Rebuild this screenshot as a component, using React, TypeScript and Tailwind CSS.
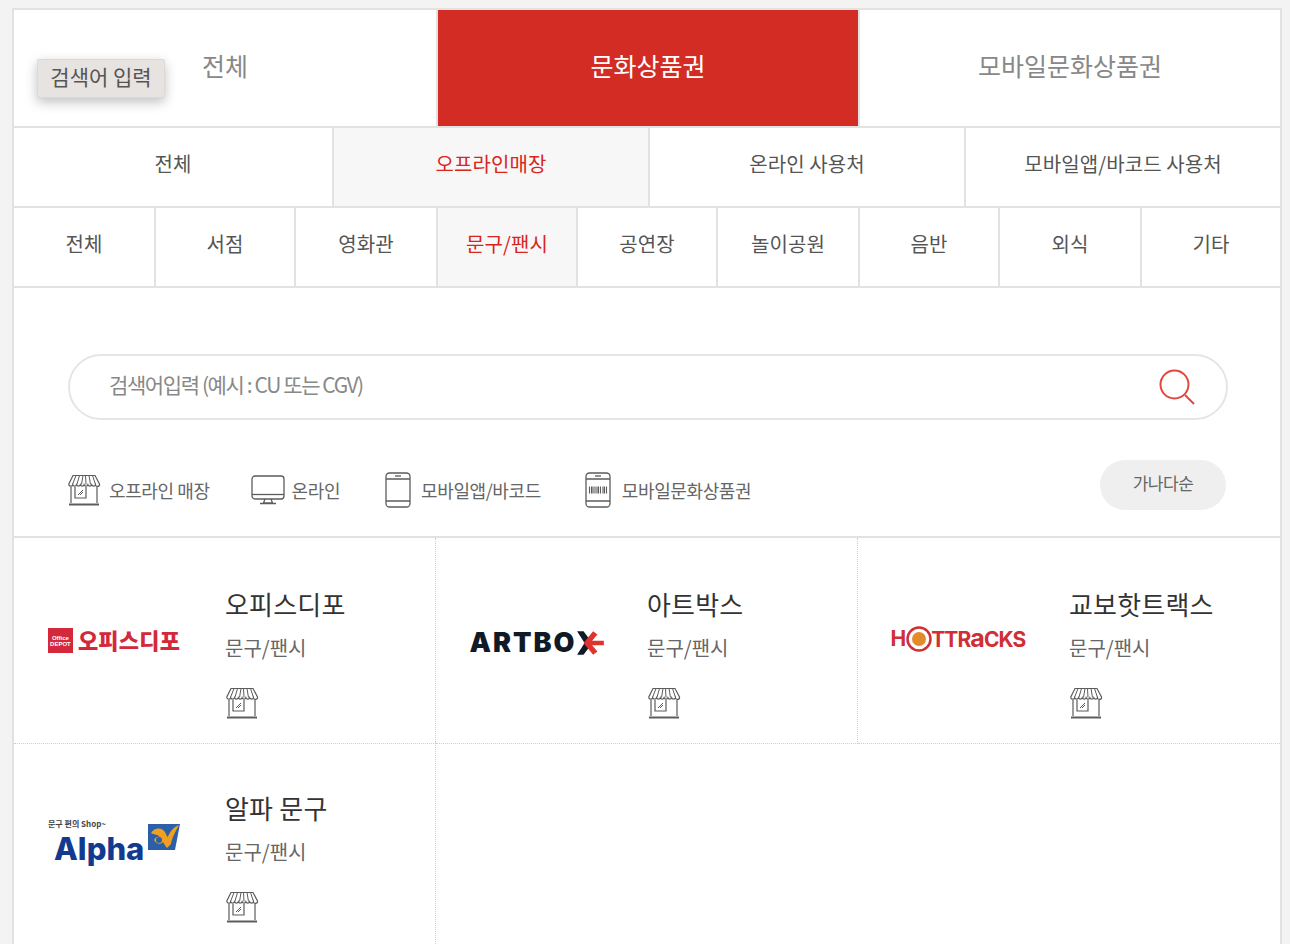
import React from "react";

const KR = "font-['Noto_Sans_CJK_KR','Noto_Sans',sans-serif]";

function StoreIcon({ className }: { className?: string }) {
    return (
        <svg viewBox="0 0 34 32" className={className} fill="none" stroke="#5c5c5c" strokeWidth="1.2">
            <path d="M6 1.500h22l4.500 8.500a2 2 0 0 1-4 .8 2 2 0 0 1-3.800 0 2 2 0 0 1-3.800 0 2 2 0 0 1-3.800 0 2 2 0 0 1-3.800 0 2 2 0 0 1-3.800 0 2 2 0 0 1-3.800 0 2 2 0 0 1-3.900-.8z" />
            <path d="M9 1.500 5.500 10.500M12.500 1.500l-2.600 9M16 1.500l-1.500 9M18.500 1.500l.5 9M22 1.500l1.500 9M25.500 1.500l3 9" strokeWidth="1" />
            <path d="M4 13v16M30 13v16" />
            <path d="M2 30.500h30" strokeWidth="2" />
            <path d="M8 13v11h11V13" />
            <path d="M11 21l5-5M13 21l3-3" strokeWidth="1" />
        </svg>
    );
}

function MonitorIcon() {
    return (
        <svg viewBox="0 0 34 30" className="w-[34px] h-[30px]" fill="none" stroke="#5c5c5c" strokeWidth="1.3">
            <rect x="1" y="1" width="32" height="23" rx="3" />
            <path d="M1 19.500h32" />
            <path d="M14 24l-1.500 4h9L20 24M9 28.500h16" />
        </svg>
    );
}

function PhoneIcon({ barcode }: { barcode?: boolean }) {
    return (
        <svg viewBox="0 0 26 36" className="w-[26px] h-[36px]" fill="none" stroke="#5c5c5c" strokeWidth="1.3">
            <rect x="1" y="1" width="24" height="34" rx="3.500" />
            <path d="M1 7h24M1 29h24" />
            <path d="M10 4h6" />
            {barcode && (
                <path d="M4.500 14.500v7M6.500 14.500v7M8 14.500v7M10 14.500v7M12 14.500v7M13.500 14.500v7M15.500 14.500v7M18 14.500v7M19.500 14.500v7M21.500 14.500v7" strokeWidth="1.1" />
            )}
        </svg>
    );
}

function SearchIcon() {
    return (
        <svg viewBox="0 0 36 36" className="w-[36px] h-[36px]" fill="none" stroke="#e0483f" strokeWidth="2">
            <circle cx="15.500" cy="15.500" r="14" />
            <path d="M26 26l9 9" />
        </svg>
    );
}

function OfficeLogo() {
    return (
        <div className="flex items-center gap-[5px] h-[26px]">
            <div className="w-[25px] h-[25px] bg-[#d3293a] flex flex-col items-center justify-center text-white text-[6px] leading-[6px] font-bold font-['Liberation_Sans',sans-serif]">
                <span>Office</span>
                <span>DEPOT</span>
            </div>
            <span className={`${KR} text-[#d3293a] text-[22px] font-black tracking-[0.200px] leading-none pb-[3px]`}>오피스디포</span>
        </div>
    );
}

function ArtboxLogo() {
    return (
        <div className="flex items-center pt-[4px] pl-[3px]">
            <span className="font-['Inter',sans-serif] font-black text-[27px] leading-none tracking-[2px] text-[#0f1a26]">ARTBO</span>
            <svg viewBox="0 0 28 24" className="w-[30px] h-[26px] -ml-[1px]">
                <path d="M1 1h6l6 8-3 3 3 3-6 8H1l7-11z" fill="#0f1a26" />
                <path d="M26 10H15l5-6-4-3-9 11 9 11 4-3-5-6h11z" fill="#e0322f" />
            </svg>
        </div>
    );
}

function HotLogo() {
    return (
        <div className="flex items-center text-[#cf2f35] font-['Inter',sans-serif] font-bold text-[21px] leading-none pb-[4px]">
            <span>H</span>
            <svg viewBox="0 0 26 26" className="w-[26px] h-[26px] -mx-[0.500px]">
                <circle cx="13" cy="13" r="11.500" fill="none" stroke="#cf2f35" strokeWidth="2.500" />
                <circle cx="13" cy="13" r="7" fill="#e38b2b" />
            </svg>
            <span className="tracking-[-0.900px]">
                TTR<span className="text-[25px]">a</span>CKS
            </span>
        </div>
    );
}

function AlphaLogo() {
    return (
        <div className="relative w-[132px] h-[50px]">
            <span className={`${KR} absolute left-0 top-0 text-[8px] leading-[10px] font-bold text-[#444]`}>문구 편의 Shop~</span>
            <span className="absolute left-[6px] top-[12px] font-['Inter',sans-serif] font-extrabold text-[31px] leading-[36px] text-[#123a8f]">Alpha</span>
            <svg viewBox="0 0 34 30" className="absolute left-[99px] top-[4px] w-[34px] h-[30px]">
                <path d="M1 1h32L28 27H1z" fill="#2d5fa8" />
                <path d="M4 10c4-6 12-6 15 1 2 5 5 6 5 10l-4 4c-3-3-4-7-6-10-3-4-6-3-10-5z" fill="#f0a020" />
                <path d="M7 17c3-5 9-4 11 0-3 5-8 5-11 0zM32 2c-6 2-10 8-12 14l4 5c1-7 5-13 8-19z" fill="#f0a020" />
                <circle cx="12" cy="17" r="3" fill="#2d5fa8" />
            </svg>
        </div>
    );
}

const row2 = ["전체", "오프라인매장", "온라인 사용처", "모바일앱/바코드 사용처"];
const row3 = ["전체", "서점", "영화관", "문구/팬시", "공연장", "놀이공원", "음반", "외식", "기타"];

const shops = [
    { name: "오피스디포", logo: <OfficeLogo /> },
    { name: "아트박스", logo: <ArtboxLogo /> },
    { name: "교보핫트랙스", logo: <HotLogo /> },
    { name: "알파 문구", logo: <AlphaLogo /> },
];

export default function App() {
    return (
        <div className={`${KR} h-[944px] overflow-hidden bg-[#f3f3f3] pt-2 pl-3 pr-2`}>
            <div className="relative bg-white border-2 border-b-0 border-[#e2e2e2] h-[936px] overflow-hidden">
                <div className="absolute left-[23px] top-[49px] w-[128px] h-[39px] bg-[#e6e3e1] rounded-[2px] border border-[#dcd9d7] shadow-[0_4px_12px_rgba(0,0,0,0.25)] flex items-center justify-center text-[21px] text-[#555] pb-[3px]">
                    검색어 입력
                </div>

                <div className="grid grid-cols-[424px_420px_1fr] h-[118px] border-b-2 border-[#e2e2e2]">
                    <div className="flex items-center justify-center text-[25px] text-[#888] border-r-2 border-[#e2e2e2] pb-[5px]">전체</div>
                    <div className="flex items-center justify-center text-[25px] text-white bg-[#d22c25] pb-[5px]">문화상품권</div>
                    <div className="flex items-center justify-center text-[25px] text-[#888] border-l-2 border-[#e2e2e2] pb-[5px]">모바일문화상품권</div>
                </div>

                <div className="grid grid-cols-[320px_316px_316px_1fr] h-[80px] border-b-2 border-[#e2e2e2]">
                    {row2.map((t, i) => (
                        <div
                            key={t}
                            className={`flex items-center justify-center text-[20px] tracking-[0.100px] pb-[6px] ${i < 3 ? "border-r-2 border-[#e2e2e2]" : ""} ${i === 1 ? "bg-[#f7f7f7] text-[#d9251c]" : "text-[#555]"}`}
                        >
                            {t}
                        </div>
                    ))}
                </div>

                <div className="grid grid-cols-[142px_140px_142px_140px_140px_142px_140px_142px_1fr] h-[80px] border-b-2 border-[#e2e2e2]">
                    {row3.map((t, i) => (
                        <div
                            key={t}
                            className={`flex items-center justify-center text-[20px] tracking-[0.100px] pb-[6px] ${i < 8 ? "border-r-2 border-[#e2e2e2]" : ""} ${i === 3 ? "bg-[#f7f7f7] text-[#d9251c]" : "text-[#555]"}`}
                        >
                            {t}
                        </div>
                    ))}
                </div>

                <div className="pt-[66px] pl-[54px] pr-[52px]">
                    <div className="h-[66px] rounded-full border-2 border-[#e5e5e5] flex items-center justify-between pl-[39px] pr-[31px]">
                        <span className="text-[21px] text-[#888] tracking-[-1.400px] pb-[4px]">검색어입력 (예시 : CU 또는 CGV)</span>
                        <SearchIcon />
                    </div>
                </div>

                <div className="h-[118px] pl-[54px] pr-[54px] flex items-start justify-between border-b-2 border-[#e2e2e2]">
                    <div className="flex items-center text-[18px] text-[#666] tracking-[-0.400px] pt-[52px]">
                        <StoreIcon className="w-[34px] h-[32px] -ml-[1px] mr-[8px]" />
                        <span className="mr-[41px]">오프라인 매장</span>
                        <MonitorIcon />
                        <span className="ml-[7px] mr-[45px]">온라인</span>
                        <PhoneIcon />
                        <span className="ml-[10px] mr-[44px]">모바일앱/바코드</span>
                        <PhoneIcon barcode />
                        <span className="ml-[11px]">모바일문화상품권</span>
                    </div>
                    <div className="mt-[40px] w-[126px] h-[50px] rounded-full bg-[#efefef] flex items-center justify-center text-[17px] text-[#666] tracking-[-0.500px] pb-[4px]">
                        가나다순
                    </div>
                </div>

                <div className="grid grid-cols-3 auto-rows-[204px]">
                    {shops.map((s, i) => (
                        <div
                            key={s.name}
                            className={`flex h-[204px] border-[#cfcfcf] border-dotted ${i < 3 ? "border-b h-[206px]" : ""} ${i % 3 !== 2 ? "border-r" : ""}`}
                        >
                            <div className="w-[211px] shrink-0 flex items-center justify-center pr-[11px]">{s.logo}</div>
                            <div className="flex flex-col pt-[46px]">
                                <span className="text-[26px] leading-[40px] tracking-[0.200px] text-[#333]">{s.name}</span>
                                <span className="text-[20px] leading-[28px] mt-[10px] text-[#666]">문구/팬시</span>
                                <StoreIcon className="w-[34px] h-[32px] mt-[25px]" />
                            </div>
                        </div>
                    ))}
                </div>
            </div>
        </div>
    );
}
